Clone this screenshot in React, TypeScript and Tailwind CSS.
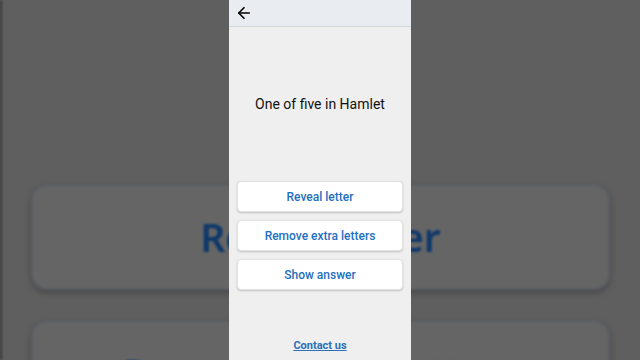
import React from 'react';
import { ArrowLeft } from 'lucide-react';

const hints = ['Reveal letter', 'Remove extra letters', 'Show answer'];

// blurred, zoomed copy of the hint buttons behind the phone frame
function Backdrop() {
  return (
    <div className="absolute inset-0 blur-[1px]" aria-hidden>
      <div className="absolute left-0 top-0 h-full w-[2px] bg-[#3a3a3a]" />
      <div className="absolute left-[31px] top-[184px] flex w-[579px] flex-col gap-[30px]">
        {hints.slice(0, 2).map((h) => (
          <div
            key={h}
            className="flex h-[106px] items-center justify-center rounded-[16px] border-2 border-[#5a5e65] bg-[#656565] shadow-[0_3px_6px_rgba(0,0,0,0.25)]"
          >
            <span className="text-[39px] font-semibold text-[#0f386a]">{h}</span>
          </div>
        ))}
      </div>
    </div>
  );
}

function Phone() {
  return (
    <div className="relative flex h-[360px] w-[182px] flex-col bg-[#efefef]" style={{ fontFamily: 'Roboto, "Noto Sans", sans-serif' }}>
      <div className="flex h-[27px] items-center border-b border-[#d4d6d9] bg-[#e9edf2] px-[6px]">
        <ArrowLeft className="h-[18px] w-[18px] text-black" strokeWidth={2.2} />
      </div>
      <div className="flex h-[85px] items-end justify-center">
        <p className="text-[14px] leading-[16px] text-[#111]">One of five in Hamlet</p>
      </div>
      <div className="mt-[69px] flex flex-col gap-[8px] px-[8px]">
        {hints.map((h) => (
          <button
            key={h}
            className="flex h-[31px] items-center justify-center rounded-[4px] border border-[#e2e2e2] bg-white text-[12px] font-medium text-[#1f6fbf] shadow-[0_1px_2px_rgba(0,0,0,0.2)]"
          >
            {h}
          </button>
        ))}
      </div>
      <div className="mt-auto flex justify-center pb-[6px]">
        <a className="text-[11px] font-bold text-[#2a6fb8] underline">Contact us</a>
      </div>
    </div>
  );
}

export default function App() {
  return (
    <div className="relative h-[360px] w-[640px] overflow-hidden bg-[#5f5f5f]">
      <Backdrop />
      <div className="relative flex justify-center">
        <Phone />
      </div>
    </div>
  );
}
